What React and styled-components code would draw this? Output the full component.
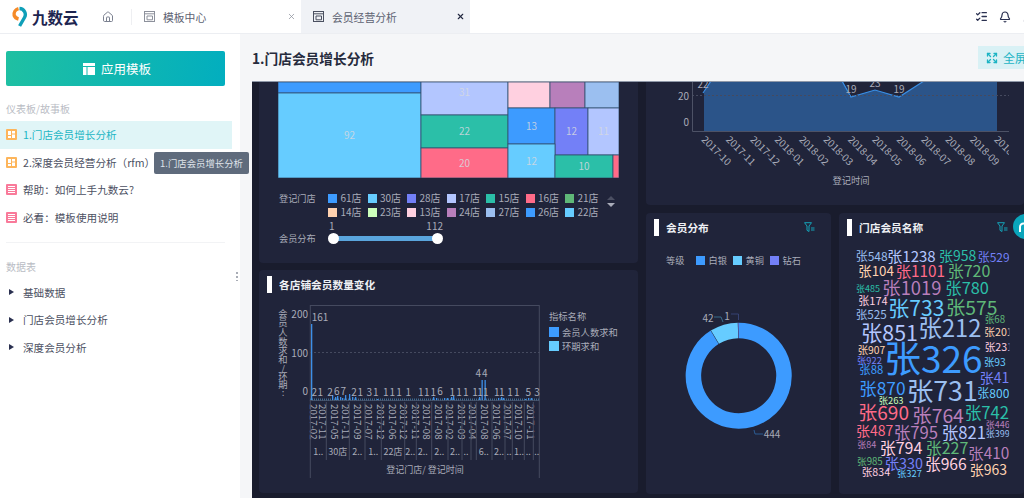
import React from 'react';
import styled, { createGlobalStyle } from 'styled-components';
import { Home, X, ListChecks, Bell, User, Expand } from 'lucide-react';

const FONT = '"Noto Sans CJK SC", "Noto Sans", sans-serif';
const TEXT = '#a9acb9';
const COLORS = {
  blue: '#3d9bff',
  sky: '#66ccff',
  indigo: '#7380f7',
  lilac: '#b3c6ff',
  teal: '#2bbfa8',
  red: '#ff6b88',
  green: '#5fb878',
  peach: '#ffd2b0',
  lime: '#ccffbb',
  pink: '#ffd0e0',
  purple: '#b87fbb',
  steel: '#9bbff0',
};

// Data
const TREEMAP = [
  { x: 278, y: 81, w: 143, h: 11, c: COLORS.blue },
  { x: 278, y: 92, w: 143, h: 85, c: COLORS.sky, v: 92 },
  { x: 421, y: 81, w: 87, h: 33, c: COLORS.lilac, v: 31, ly: 90 },
  { x: 421, y: 114, w: 87, h: 33, c: COLORS.teal, v: 22 },
  { x: 421, y: 147, w: 87, h: 30, c: COLORS.red, v: 20 },
  { x: 508, y: 81, w: 42, h: 26, c: COLORS.pink },
  { x: 550, y: 81, w: 35, h: 26, c: COLORS.purple },
  { x: 585, y: 81, w: 34, h: 26, c: COLORS.steel },
  { x: 508, y: 107, w: 47, h: 36, c: COLORS.blue, v: 13 },
  { x: 555, y: 107, w: 33, h: 47, c: COLORS.indigo, v: 12 },
  { x: 588, y: 107, w: 31, h: 47, c: COLORS.lilac, v: 11 },
  { x: 508, y: 143, w: 47, h: 34, c: COLORS.sky, v: 12 },
  { x: 555, y: 154, w: 58, h: 23, c: COLORS.teal, v: 10 },
  { x: 613, y: 154, w: 6, h: 23, c: COLORS.red },
];

const STORE_LEGEND = [
  ['61店', COLORS.blue], ['30店', COLORS.sky], ['28店', COLORS.indigo], ['17店', COLORS.lilac],
  ['15店', COLORS.teal], ['16店', COLORS.red], ['21店', COLORS.green],
  ['14店', COLORS.peach], ['23店', COLORS.lime], ['13店', COLORS.pink], ['24店', COLORS.purple],
  ['27店', COLORS.steel], ['26店', COLORS.blue], ['22店', COLORS.sky],
];

const BAR_LABELS = [
  [314.3, '2'], [320.3, '1'], [330, '2'], [336.7, '6', 390], [343.3, '7', 390], [354, '2'], [360.3, '1'],
  [369.3, '3'], [375.7, '1'], [385.7, '1'], [392.3, '1'], [399, '1'], [408.3, '1'], [420.7, '1'],
  [426.7, '1'], [433.3, '1'], [440, '6', 390], [452.3, '1'], [459, '1'], [465.7, '1'], [475, '1'],
  [480, '1'], [485.7, '1'], [496.7, '1'], [501.7, '1'], [510, '1'], [516.7, '1'], [528.3, '5'], [537, '3'],
];

const BARS = [
  [311, 76], [332, 5], [335, 3], [337, 4], [340, 3], [342, 2], [345, 5], [349, 6], [352, 3], [355, 3],
  [377, 1], [433, 3], [436, 2], [444, 2], [447, 2], [451, 3], [453, 4], [479, 3], [481.5, 20], [484.5, 20],
  [498, 2], [501, 3], [503, 2], [525, 1], [528, 2], [531, 2],
];

const BAR_DATES = [
  [314, '2017-02'], [323.3, '2017-11'], [335, '2017-05'], [345.7, '2017-11'], [357.7, '2017-09'],
  [369, '2017-07'], [381, '2017-12'], [392.7, '2017-06'], [404, '2017-12'], [415.7, '2017-11'],
  [427.3, '2017-08'], [438.7, '2017-08'], [450, '2017-02'], [461.7, '2017-09'], [473.3, '2017-04'],
  [485, '2017-08'], [496.7, '2017-06'], [508.3, '2017-07'], [519, '2017-10'], [530.7, '2017-11'],
];

const GROUP_LINES = [326.3, 349.3, 365, 381.3, 404.7, 416.3, 431.7, 448, 462, 471, 476.3, 492, 505, 512.3, 524.3, 533.3];

const GROUP_LABELS = [
  [318.3, '1..'], [337.7, '30店'], [357.3, '2..'], [373.3, '1..'], [393, '22店'], [410.3, '2..'],
  [422.7, '2..'], [439.3, '2..'], [455, '2..'], [466, '..'], [483.7, '6..'], [499, '2..'], [509, '..'],
  [519, '1..'], [528.3, '..'], [536.7, '..'],
];

const Y_TITLE = [
  ['会', 313.3], ['员', 322.3], ['人', 331.7], ['数', 341], ['求', 350.3], ['和', 359.3],
  ['/', 368.3], ['环', 375.7], ['期', 384], [':', 392.3],
];

const MONTHS = [
  '2017-10', '2017-11', '2017-12', '2018-01', '2018-02', '2018-03', '2018-04',
  '2018-05', '2018-06', '2018-07', '2018-08', '2018-09', '2018-10',
];

// word cloud: text, x, y, size, colour. Drawn on a 3x grid so the small sizes stay exact
const WORDS = [
  ['张548', 62, 150, 36, COLORS.steel], ['张1238', 157, 150, 45, COLORS.lilac], ['张958', 312, 150, 42, COLORS.teal],
  ['张529', 428, 155, 36, COLORS.indigo], ['张104', 70, 196, 40, COLORS.peach], ['张1101', 182, 196, 46, COLORS.red],
  ['张720', 338, 196, 48, COLORS.green], ['张485', 63, 251, 27, COLORS.teal], ['张1019', 142, 245, 55, COLORS.purple],
  ['张780', 331, 245, 49, COLORS.teal], ['张174', 70, 285, 33, COLORS.pink], ['张733', 160, 305, 63, COLORS.sky],
  ['张575', 333, 305, 58, COLORS.green], ['张525', 62, 325, 35, COLORS.steel], ['张68', 449, 343, 29, COLORS.green],
  ['张201', 448, 380, 32, COLORS.peach], ['张851', 78, 380, 64, COLORS.lilac], ['张212', 250, 367, 71, COLORS.steel],
  ['张326', 147, 457, 111, COLORS.blue], ['张907', 68, 432, 31, COLORS.peach], ['张231', 449, 424, 32, COLORS.pink],
  ['张922', 66, 465, 28, COLORS.indigo], ['张93', 447, 469, 31, COLORS.sky], ['张88', 73, 492, 34, COLORS.blue],
  ['张41', 434, 515, 42, COLORS.indigo], ['张870', 73, 547, 52, COLORS.blue], ['张731', 215, 552, 80, COLORS.steel],
  ['张800', 427, 561, 36, COLORS.sky], ['张263', 131, 585, 28, COLORS.lime], ['张690', 70, 620, 57, COLORS.red],
  ['张764', 232, 630, 58, COLORS.purple], ['张742', 389, 620, 50, COLORS.teal], ['张487', 63, 676, 42, COLORS.red],
  ['张795', 176, 680, 50, COLORS.purple], ['张821', 320, 680, 50, COLORS.lilac], ['张446', 452, 659, 27, COLORS.purple],
  ['张399', 452, 686, 27, COLORS.steel], ['张84', 67, 719, 27, COLORS.purple], ['张794', 134, 726, 48, COLORS.pink],
  ['张227', 272, 725, 48, COLORS.green], ['张410', 400, 741, 46, COLORS.purple], ['张985', 66, 769, 29, COLORS.green],
  ['张330', 149, 773, 43, COLORS.indigo], ['张966', 270, 776, 47, COLORS.pink], ['张963', 404, 792, 42, COLORS.peach],
  ['张834', 80, 800, 32, COLORS.pink], ['张327', 186, 805, 28, COLORS.sky],
];

const DONUT = { cx: 738.7, cy: 375.7, r: 45.3, slices: [[444, COLORS.blue], [42, COLORS.sky], [1, COLORS.indigo]] };

function arcPath(cx, cy, r, from, to) {
  const point = (deg) => {
    const a = ((deg - 90) * Math.PI) / 180;
    return `${(cx + r * Math.cos(a)).toFixed(2)} ${(cy + r * Math.sin(a)).toFixed(2)}`;
  };
  return `M${point(from)} A${r} ${r} 0 ${to - from > 180 ? 1 : 0} 1 ${point(to)}`;
}

const GlobalStyle = createGlobalStyle`
  html, body { margin: 0; padding: 0; background: #fff; }
  body { font-family: ${FONT}; }
  svg text { font-family: ${FONT}; }
`;

const Shell = styled.div`width: 1024px; height: 498px; overflow: hidden; display: flex; flex-direction: column;`;

// Top bar
const TopBar = styled.header`height: 34px; flex-shrink: 0; display: flex; align-items: center; background: #fff; border-bottom: 1px solid #eceef2; box-sizing: border-box; padding-left: 11px;`;
const Brand = styled.div`width: 91px; display: flex; align-items: center; gap: 4px;`;
const BrandName = styled.span`font-size: 15.5px; font-weight: 700; color: #1d2550;`;
const HomeLink = styled.div`display: flex; color: #7b8190;`;
const TabDivider = styled.div`width: 1px; height: 16px; background: #eeeff2; margin-left: 17px;`;
const Tab = styled.div`width: 169px; height: 33px; box-sizing: border-box; display: flex; align-items: center; gap: 8px; padding: 0 5px 0 12px; background: ${(props) => (props.$active ? '#f0f2f6' : '#fff')}; color: #5d6272; font-size: 10.8px;`;
const TabIcon = styled.svg`width: 11px; height: 11px; flex-shrink: 0; color: ${(props) => (props.$active ? '#4a5060' : '#8d919c')};`;
const TabClose = styled.span`margin-left: auto; display: flex; color: ${(props) => (props.$active ? '#222840' : '#8d919c')};`;
const TopActions = styled.div`margin-left: auto; margin-right: -10px; display: flex; align-items: center; gap: 11px; color: #2a3050;`;

// Sidebar
const Body = styled.div`flex: 1; min-height: 0; display: flex;`;
const Sidebar = styled.aside`width: 240px; flex-shrink: 0; box-sizing: border-box; padding-top: 17px; background: #fff; position: relative; z-index: 2;`;
const ApplyButton = styled.div`height: 35px; margin: 0 15px 0 6px; padding-left: 3px; border-radius: 2px; background: linear-gradient(100deg, #1fc0a2, #02aebf); color: #fff; font-size: 12.5px; display: flex; align-items: center; justify-content: center; gap: 6px;`;
const SectionLabel = styled.div`font-size: 10px; line-height: 14px; color: #b9bcc4; padding-left: 6px; margin-top: ${(props) => props.$top}px; margin-bottom: ${(props) => props.$bottom}px;`;
const NavItem = styled.div`height: 27.6px; width: 232px; box-sizing: border-box; padding-left: 6px; display: flex; align-items: center; gap: 6px; font-size: 10.6px; color: ${(props) => (props.$active ? '#1bb5c4' : '#4c5062')}; background: ${(props) => (props.$active ? '#e0f5f7' : 'transparent')};`;
const TreeItem = styled(NavItem)`padding-left: 9px; gap: 9px;`;
const TreeArrow = styled.span`width: 0; height: 0; border-left: 5px solid #2a3050; border-top: 3px solid transparent; border-bottom: 3px solid transparent;`;
const SideDivider = styled.div`height: 1px; background: #f2f3f5; margin: 11px 15px 0 6px;`;
const Tooltip = styled.div`position: absolute; left: 154px; top: 118px; width: 95px; height: 22px; border-radius: 2px; background: #5f6b7c; color: #dfe3ea; font-size: 9.4px; display: flex; align-items: center; justify-content: center;`;
const DragDots = styled.div`position: absolute; left: 236px; top: 237px; width: 2px; height: 10px; background: radial-gradient(circle, #a9adb6 1px, transparent 1px) 0 0 / 2px 4px;`;

// Main area
const Main = styled.main`flex: 1; min-width: 0; display: flex; flex-direction: column; background: #f5f6f8; overflow: hidden;`;
const TitleBar = styled.div`height: 47px; flex-shrink: 0; display: flex; align-items: center; justify-content: space-between; padding-left: 12px;`;
const PageTitle = styled.h1`margin: 0; font-size: 13.7px; font-weight: 700; color: #262b3d;`;
const FullscreenButton = styled.div`width: 62px; height: 23px; margin-right: -16px; flex-shrink: 0; box-sizing: border-box; padding-left: 8px; display: flex; align-items: center; gap: 5px; background: #d9f1f5; color: #1cb4c4; font-size: 12px;`;
const Dashboard = styled.div`flex: 1; min-height: 0; margin-left: 12px; padding-left: 7px; display: flex; gap: 8px; background: #191c2d; border-top: 1px solid #8f98a8; box-sizing: border-box; overflow: hidden;`;
const Column = styled.div`flex-shrink: 0; width: ${(props) => props.$width}px; display: flex; flex-direction: column; gap: ${(props) => props.$gap}px;`;
const CardRow = styled.div`display: flex; gap: 8px;`;
const Card = styled.section`flex-shrink: 0; width: ${(props) => (props.$width ? `${props.$width}px` : 'auto')}; height: ${(props) => props.$height}px; background: #20243a; border-radius: ${(props) => (props.$clipped ? '0 0 4px 4px' : '4px')}; position: relative;`;
const CardHead = styled.div`height: 29px; display: flex; align-items: center; gap: 8px; padding-left: 8px;`;
const CardTitle = styled.h3`margin: 0; font-size: 10.7px; font-weight: 700; color: #eef0f4; display: flex; align-items: center; gap: 7.5px; &::before { content: ''; width: 4.5px; height: 17px; background: #fff; }`;
const FilterIcon = styled.svg`width: 11px; height: 11px; margin-left: auto; margin-right: ${(props) => props.$right}px; color: #14a3b8;`;

// Treemap card
const TreemapBody = styled.div`padding: 0 19px 0 20px;`;
const TreemapChart = styled.svg`display: block; width: 341px; height: 96px; margin-left: -1px;`;
const LegendRow = styled.div`display: flex; margin-top: 13px; font-size: 10px; line-height: 14px; color: ${TEXT};`;
const RowLabel = styled.span`width: 49px; flex-shrink: 0; font-size: 9.2px;`;
const LegendGrid = styled.div`display: grid; grid-template-columns: repeat(7, 39.5px);`;
const LegendItem = styled.div`display: flex; align-items: center; gap: 3.5px; white-space: nowrap;`;
const Swatch = styled.span`width: ${(props) => props.$size || 9}px; height: ${(props) => props.$size || 9}px; flex-shrink: 0; background: ${(props) => props.$color};`;
const Pager = styled.div`display: flex; flex-direction: column; gap: 3px; margin: 5px 0 0 2px;`;
const PagerArrow = styled.span`width: 0; height: 0; border-left: 4px solid transparent; border-right: 4px solid transparent; ${(props) => (props.$up ? 'border-bottom: 4px solid #4b4f62;' : 'border-top: 4px solid #a9acb9;')}`;
const SliderRow = styled.div`display: flex; align-items: flex-end; font-size: 10px; color: ${TEXT};`;
const SliderLabel = styled(RowLabel)`line-height: 14px;`;
const SliderBox = styled.div`width: 115px;`;
const SliderValues = styled.div`display: flex; justify-content: space-between; line-height: 13px; padding-left: 1px;`;
const SliderTrack = styled.div`height: 13px; position: relative; &::before { content: ''; position: absolute; left: 6px; right: 6px; top: 4px; height: 5px; background: #5aa5dd; border-radius: 1px; }`;
const SliderHandle = styled.span`position: absolute; top: 1px; ${(props) => (props.$end ? 'right: 0;' : 'left: 0;')} width: 11px; height: 11px; border-radius: 50%; background: #fff;`;

// Bar chart card
const ChartRow = styled.div`display: flex; padding-left: 19px;`;
const BarChart = styled.svg`display: block; width: 268px; height: 190px; flex-shrink: 0;`;
const SeriesLegend = styled.div`margin: 10px 0 0 3px; font-size: 9.3px; line-height: 14px; color: ${TEXT}; display: flex; flex-direction: column;`;
const SeriesLabel = styled.div`margin-bottom: 2px;`;
const SeriesItem = styled(LegendItem)`gap: 3px;`;

// Right column cards
const AreaChart = styled.svg`display: block; width: 378px; height: 124px;`;
const GradeLegend = styled.div`display: flex; align-items: center; padding-left: 20px; margin-top: 12px; font-size: 9.2px; line-height: 12px; color: ${TEXT};`;
const GradeLabel = styled.span`width: 30px;`;
const GradeItem = styled(LegendItem)`width: 37px;`;
const DonutChart = styled.svg`display: block; width: 185px; height: 170px; margin-top: 24px;`;
const WordCloud = styled.svg`position: absolute; left: 0; top: 0; width: 185px; height: 281px;`;
const FloatBall = styled.div`position: absolute; left: 174px; top: 1px; width: 25px; height: 25px; border-radius: 50%; background: #0aa5bb; color: #fff; display: flex; align-items: center; padding-left: 6px; box-sizing: border-box;`;

const TemplateIcon = ({ active }) => (
  <TabIcon $active={active} viewBox="0 0 11 11" fill="none" stroke="currentColor">
    <rect x="0.5" y="0.5" width="10" height="10" />
    <path d="M0.5 2.8H10.5M3 5V8.8H8.5V5Z" />
  </TabIcon>
);

const BoardIcon = () => (
  <svg width="11" height="11" viewBox="0 0 11 11">
    <rect width="11" height="11" rx="1" fill="#fdb55b" />
    <path d="M2 2H5V6H2ZM6 2H9V4.5H6ZM6 5.5H9V9H6ZM2 7H5V9H2Z" fill="#fff" />
  </svg>
);

const DocIcon = () => (
  <svg width="11" height="11" viewBox="0 0 11 11">
    <rect width="11" height="11" rx="1" fill="#f97a9a" />
    <path d="M2 2.5H9M2 4.5H9M2 6.5H9M2 8.5H9" stroke="#fff" />
  </svg>
);

const Filter = ({ right }) => (
  <FilterIcon $right={right} viewBox="0 0 11 11" fill="none" stroke="currentColor">
    <path d="M0.5 0.7H7.5L5 4V9.5L3 8.3V4Z" />
    <path d="M7 6H10.5M7 8H10.5" />
  </FilterIcon>
);

function App() {
  let angle = 0;
  const total = DONUT.slices.reduce((sum, s) => sum + s[0], 0);

  return (
    <Shell>
      <GlobalStyle />
      <TopBar>
        <Brand>
          <svg width="17" height="22" viewBox="0 0 17 22" fill="none" strokeWidth="3.4">
            <path d="M8.5 2.5A6 6 0 0 1 13.5 11.5L8.6 20" stroke="#0f9fb8" />
            <path d="M7.5 2.6A6 6 0 0 0 3.2 9.5C4 11.5 5.5 12.5 7.5 13" stroke="#f58a28" />
          </svg>
          <BrandName>九数云</BrandName>
        </Brand>
        <HomeLink><Home size={12} /></HomeLink>
        <TabDivider />
        <Tab>
          <TemplateIcon />
          模板中心
          <TabClose><X size={9} strokeWidth={2} /></TabClose>
        </Tab>
        <Tab $active>
          <TemplateIcon active />
          会员经营分析
          <TabClose $active><X size={9} strokeWidth={3} /></TabClose>
        </Tab>
        <TopActions>
          <ListChecks size={13} strokeWidth={2.4} />
          <Bell size={12} strokeWidth={2.4} />
          <User size={12} strokeWidth={2.4} />
        </TopActions>
      </TopBar>

      <Body>
        <Sidebar>
          <ApplyButton>
            <svg width="12" height="12" viewBox="0 0 12 12" fill="#fff">
              <path d="M0 0H12V3H0ZM0 4H3.5V12H0ZM4.5 4H12V12H4.5Z" />
            </svg>
            应用模板
          </ApplyButton>
          <SectionLabel $top={16} $bottom={5}>仪表板/故事板</SectionLabel>
          <NavItem $active><BoardIcon />1.门店会员增长分析</NavItem>
          <NavItem><BoardIcon />2.深度会员经营分析（rfm）</NavItem>
          <NavItem><DocIcon />帮助：如何上手九数云?</NavItem>
          <NavItem><DocIcon />必看：模板使用说明</NavItem>
          <SideDivider />
          <SectionLabel $top={17} $bottom={4}>数据表</SectionLabel>
          <TreeItem><TreeArrow />基础数据</TreeItem>
          <TreeItem><TreeArrow />门店会员增长分析</TreeItem>
          <TreeItem><TreeArrow />深度会员分析</TreeItem>
          <Tooltip>1.门店会员增长分析</Tooltip>
          <DragDots />
        </Sidebar>

        <Main>
          <TitleBar>
            <PageTitle>1.门店会员增长分析</PageTitle>
            <FullscreenButton><Expand size={12} strokeWidth={2.6} />全屏</FullscreenButton>
          </TitleBar>

          <Dashboard>
            <Column $width={379} $gap={7}>
              <Card $height={181} $clipped>
                <TreemapBody>
                  <TreemapChart viewBox="278 81 341 96">
                    {TREEMAP.map((t) => (
                      <g key={`${t.x}-${t.y}`}>
                        <rect x={t.x} y={t.y} width={t.w} height={t.h} fill={t.c} stroke="#33506f" strokeWidth="0.8" />
                        {t.v && (
                          <text x={t.x + t.w / 2} y={t.ly || t.y + t.h / 2 - 1} textAnchor="middle" dominantBaseline="central" fontSize="10" fill="#d6d9e0" fillOpacity="0.85">{t.v}</text>
                        )}
                      </g>
                    ))}
                  </TreemapChart>
                  <LegendRow>
                    <RowLabel>登记门店</RowLabel>
                    <LegendGrid>
                      {STORE_LEGEND.map(([name, color]) => (
                        <LegendItem key={name}><Swatch $color={color} />{name}</LegendItem>
                      ))}
                    </LegendGrid>
                    <Pager><PagerArrow $up /><PagerArrow /></Pager>
                  </LegendRow>
                  <SliderRow>
                    <SliderLabel>会员分布</SliderLabel>
                    <SliderBox>
                      <SliderValues><span>1</span><span>112</span></SliderValues>
                      <SliderTrack><SliderHandle /><SliderHandle $end /></SliderTrack>
                    </SliderBox>
                  </SliderRow>
                </TreemapBody>
              </Card>

              <Card $height={223}>
                <CardHead><CardTitle>各店铺会员数量变化</CardTitle></CardHead>
                <ChartRow>
                  <BarChart viewBox="278 299 268 190">
                    <rect x="310.3" y="305.5" width="229" height="95" fill="none" stroke="#454a5f" />
                    <line x1="310" y1="352.5" x2="540" y2="352.5" stroke="#454a5f" strokeDasharray="2 2" />
                    <line x1="310" y1="399.5" x2="540" y2="399.5" stroke="#3f6a8f" strokeWidth="2" strokeDasharray="1 1" />
                    {BARS.map(([x, h]) => (
                      <rect key={x} x={x} y={400 - h} width="1.3" height={h} fill="#3d8fe8" />
                    ))}
                    {Y_TITLE.map(([ch, y]) => (
                      <text key={y} x="283" y={y} textAnchor="middle" dominantBaseline="central" fontSize="9.3" fill={TEXT}>{ch}</text>
                    ))}
                    <g fontSize="10" fill={TEXT} textAnchor="end" dominantBaseline="central">
                      <text x="308" y="313">200</text>
                      <text x="308" y="352">100</text>
                      <text x="308" y="390">0</text>
                    </g>
                    <g fontSize="10" fill={TEXT} textAnchor="middle" dominantBaseline="central">
                      <text x="320" y="316">161</text>
                      <text x="482" y="372" letterSpacing="1">44</text>
                      {BAR_LABELS.map(([x, v, y]) => (
                        <text key={x} x={x} y={y || 391.7}>{v}</text>
                      ))}
                    </g>
                    {BAR_DATES.map(([x, d]) => (
                      <text key={x} x={x} y="404" transform={`rotate(90 ${x} 404)`} fontSize="9.7" fill={TEXT} dominantBaseline="central">{d}</text>
                    ))}
                    <g stroke="#454a5f">
                      {GROUP_LINES.map((x) => (
                        <line key={x} x1={x} y1="402" x2={x} y2="460" />
                      ))}
                      <line x1="310.3" y1="400" x2="310.3" y2="478" />
                      <line x1="539.3" y1="400" x2="539.3" y2="478" />
                    </g>
                    <g fontSize="9" fill={TEXT} textAnchor="middle" dominantBaseline="central">
                      {GROUP_LABELS.map(([x, v]) => (
                        <text key={x} x={x} y="451">{v}</text>
                      ))}
                      <text x="425" y="469">登记门店/ 登记时间</text>
                    </g>
                  </BarChart>
                  <SeriesLegend>
                    <SeriesLabel>指标名称</SeriesLabel>
                    <SeriesItem><Swatch $color={COLORS.blue} $size={10} />会员人数求和</SeriesItem>
                    <SeriesItem><Swatch $color={COLORS.sky} $size={10} />环期求和</SeriesItem>
                  </SeriesLegend>
                </ChartRow>
              </Card>
            </Column>

            <Column $width={378} $gap={8}>
              <Card $height={123} $clipped>
                <AreaChart viewBox="646 81 378 124">
                  <defs>
                    <clipPath id="area-clip"><rect x="646" y="81" width="363" height="124" /></clipPath>
                  </defs>
                  <polygon points="704,91 710,81 843,81 851,96 875,89 899,96 923,81 997,81 997,130 704,130" fill="#2b5489" />
                  <polyline points="703,92 711,80" fill="none" stroke="#3a8fe6" strokeWidth="1.2" />
                  <polyline points="842,80 851,96 875,89 899,96 924,80" fill="none" stroke="#3a8fe6" strokeWidth="1.2" />
                  <line x1="692" y1="94.5" x2="1009" y2="94.5" stroke="#454a5f" strokeDasharray="2 2" />
                  <path d="M692.5 81V130.5H1009" fill="none" stroke="#4d5266" />
                  <g fontSize="10" fill={TEXT} textAnchor="end" dominantBaseline="central">
                    <text x="689" y="94.5">20</text>
                    <text x="689" y="120">0</text>
                  </g>
                  <g fontSize="10" fill={TEXT} textAnchor="middle" dominantBaseline="central">
                    <text x="703" y="82">22</text>
                    <text x="851" y="87">19</text>
                    <text x="875" y="81">23</text>
                    <text x="899" y="87">19</text>
                    <text x="851" y="179" fontSize="9.3">登记时间</text>
                  </g>
                  <g clipPath="url(#area-clip)">
                    {MONTHS.map((m, i) => {
                      const x = 704 + i * 24.4;
                      return (
                        <text key={m} x={x} y="136" transform={`rotate(45 ${x} 136)`} fontSize="10" fill={TEXT} dominantBaseline="central">{m}</text>
                      );
                    })}
                  </g>
                </AreaChart>
              </Card>

              <CardRow>
                <Card $width={185} $height={281}>
                  <CardHead>
                    <CardTitle>会员分布</CardTitle>
                    <Filter right={16} />
                  </CardHead>
                  <GradeLegend>
                    <GradeLabel>等级</GradeLabel>
                    <GradeItem><Swatch $color={COLORS.blue} />白银</GradeItem>
                    <GradeItem><Swatch $color={COLORS.sky} />黄铜</GradeItem>
                    <GradeItem><Swatch $color={COLORS.indigo} />钻石</GradeItem>
                  </GradeLegend>
                  <DonutChart viewBox="646 290 185 170">
                    {DONUT.slices.map(([value, color]) => {
                      const from = angle;
                      angle += (value / total) * 360;
                      return (
                        <path key={color} d={arcPath(DONUT.cx, DONUT.cy, DONUT.r, from, angle)} fill="none" stroke={color} strokeWidth="15.5" />
                      );
                    })}
                    <path d={arcPath(DONUT.cx, DONUT.cy, DONUT.r, 328, 328.4)} fill="none" stroke="#20243a" strokeWidth="16" />
                    <path d={arcPath(DONUT.cx, DONUT.cy, DONUT.r, 359.1, 359.5)} fill="none" stroke="#20243a" strokeWidth="16" />
                    <g fill="none" strokeWidth="0.8">
                      <path d="M714 317H721L723 322" stroke="#3e7f9f" />
                      <path d="M731 314H738.5V320" stroke="#3b4a80" />
                      <path d="M754 430L755 434H763" stroke="#2f6aa8" />
                    </g>
                    <g fontSize="10" fill={TEXT} textAnchor="middle" dominantBaseline="central">
                      <text x="708" y="317">42</text>
                      <text x="727" y="315">1</text>
                      <text x="772" y="433.5">444</text>
                    </g>
                  </DonutChart>
                </Card>

                <Card $width={185} $height={281}>
                  <CardHead>
                    <CardTitle>门店会员名称</CardTitle>
                    <Filter right={16} />
                  </CardHead>
                  <WordCloud viewBox="12 24 555 843">
                    <defs>
                      <clipPath id="cloud-clip"><rect x="12" y="24" width="511" height="843" /></clipPath>
                    </defs>
                    <g clipPath="url(#cloud-clip)">
                      {WORDS.map(([word, x, y, size, color]) => (
                        <text key={word} x={x} y={y} fontSize={size} fill={color} dominantBaseline="central">{word}</text>
                      ))}
                    </g>
                  </WordCloud>
                  <FloatBall>
                    <svg width="9" height="12" viewBox="0 0 9 12" fill="none" stroke="#fff" strokeWidth="2">
                      <path d="M1 11V6A3.5 3.5 0 0 1 8 6V8" />
                    </svg>
                  </FloatBall>
                </Card>
              </CardRow>
            </Column>
          </Dashboard>
        </Main>
      </Body>
    </Shell>
  );
}

export default App;
